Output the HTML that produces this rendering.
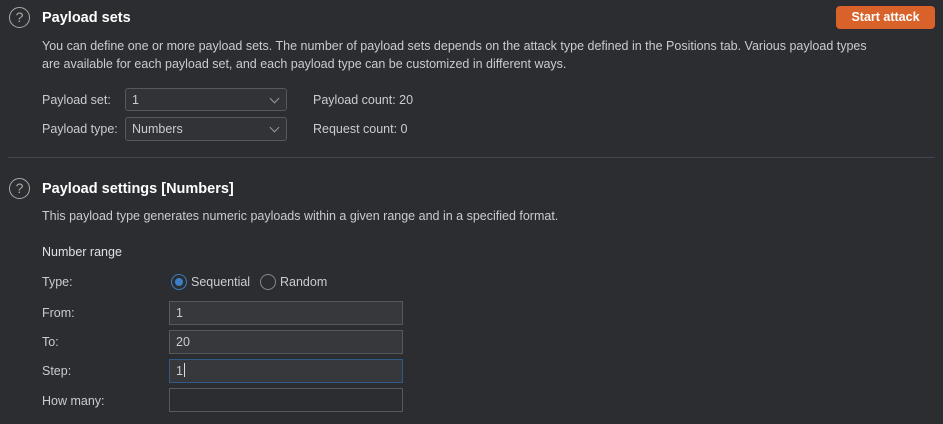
<!DOCTYPE html><html><head><style>
body{margin:0;width:943px;height:424px;background:#2b2d30;font-family:"Liberation Sans",sans-serif;color:#c9ccd1;font-size:12.5px;position:relative;overflow:hidden}
.a{position:absolute;white-space:nowrap}
.h{font-weight:bold;font-size:14.5px;color:#fff}
.help{position:absolute;width:19px;height:19px;border:1.5px solid #aaa;border-radius:50%;color:#aaa;font-size:14px;text-align:center;line-height:19px}
.box{position:absolute;background:#36383b;border:1px solid #55585c;box-sizing:border-box;padding-left:6px;color:#c9ccd1}
.cb{border-radius:3px;background:#313336}
.chev{position:absolute;right:8px;top:6px;width:6px;height:6px;border-right:1px solid #999;border-bottom:1px solid #999;transform:rotate(45deg)}
</style></head><body>
<div class="help" style="left:9px;top:7px">?</div>
<div class="a h" style="left:42px;top:10px">Payload sets</div>
<div class="a" style="left:836px;top:6px;width:99px;height:23px;background:#d9622b;border-radius:4px;color:#fff;font-weight:bold;text-align:center;line-height:23px;font-size:12.5px">Start attack</div>
<div class="a" style="left:42px;top:39px">You can define one or more payload sets. The number of payload sets depends on the attack type defined in the Positions tab. Various payload types</div>
<div class="a" style="left:42px;top:57px">are available for each payload set, and each payload type can be customized in different ways.</div>
<div class="a" style="left:42px;top:93px">Payload set:</div>
<div class="box cb" style="left:125px;top:88px;width:162px;height:23px;line-height:22px">1<div class="chev"></div></div>
<div class="a" style="left:313px;top:93px">Payload count: 20</div>
<div class="a" style="left:42px;top:122px">Payload type:</div>
<div class="box cb" style="left:125px;top:117px;width:162px;height:24px;line-height:23px">Numbers<div class="chev"></div></div>
<div class="a" style="left:313px;top:122px">Request count: 0</div>
<div class="a" style="left:8px;top:157px;width:927px;height:1px;background:#43464a"></div>
<div class="help" style="left:9px;top:178px">?</div>
<div class="a h" style="left:42px;top:181px">Payload settings [Numbers]</div>
<div class="a" style="left:42px;top:209px">This payload type generates numeric payloads within a given range and in a specified format.</div>
<div class="a" style="left:42px;top:245px;color:#dfe1e5">Number range</div>
<div class="a" style="left:42px;top:275px">Type:</div>
<div class="a" style="left:171px;top:274px;width:14px;height:14px;border:1px solid #3d7fc4;border-radius:50%"><div style="position:absolute;left:3px;top:3px;width:8px;height:8px;border-radius:50%;background:#3d7fc4"></div></div>
<div class="a" style="left:191px;top:275px">Sequential</div>
<div class="a" style="left:260px;top:274px;width:14px;height:14px;border:1px solid #888;border-radius:50%"></div>
<div class="a" style="left:280px;top:275px">Random</div>
<div class="a" style="left:42px;top:306px">From:</div>
<div class="box" style="left:169px;top:301px;width:234px;height:24px;line-height:23px">1</div>
<div class="a" style="left:42px;top:335px">To:</div>
<div class="box" style="left:169px;top:330px;width:234px;height:24px;line-height:23px">20</div>
<div class="a" style="left:42px;top:364px">Step:</div>
<div class="box" style="left:169px;top:359px;width:234px;height:24px;line-height:23px;border-color:#2f5a87">1<span style="display:inline-block;width:1px;height:14px;background:#ddd;vertical-align:-2px;margin-left:1px"></span></div>
<div class="a" style="left:42px;top:394px">How many:</div>
<div class="box" style="left:169px;top:388px;width:234px;height:24px;background:#2b2d30"></div>
</body></html>
